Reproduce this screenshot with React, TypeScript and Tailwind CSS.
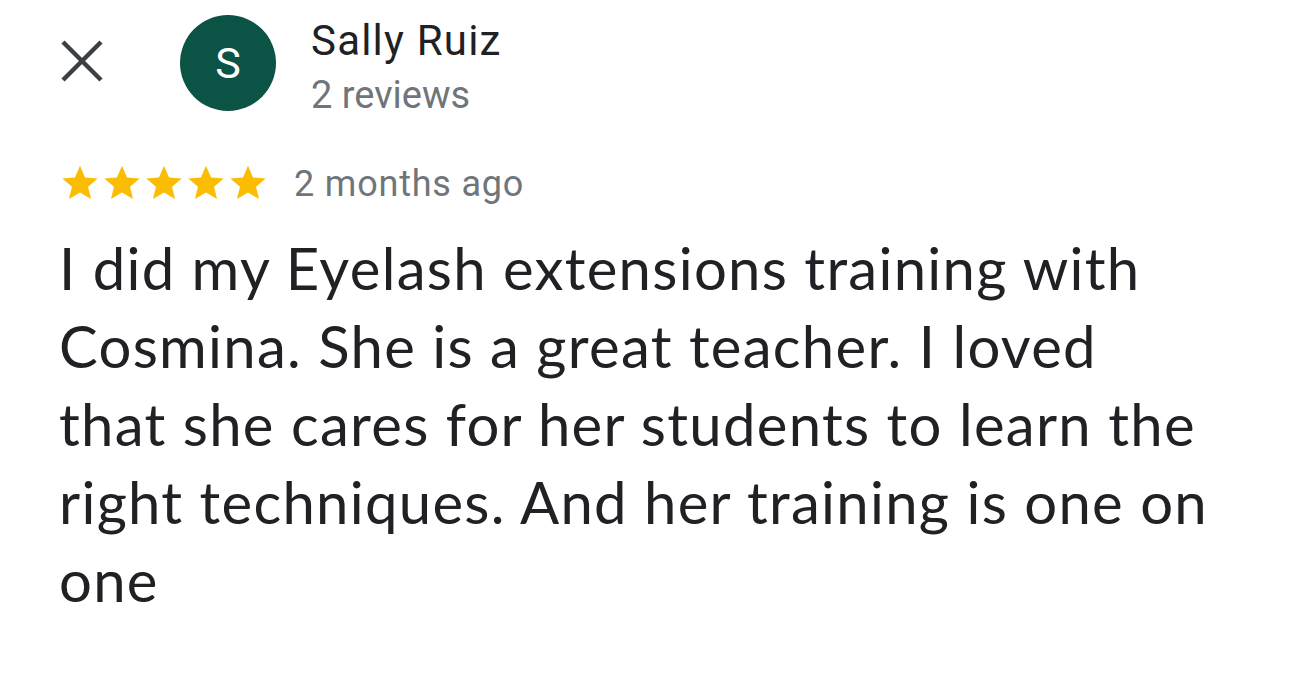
import React from "react";

const Star = () => (
  <svg width="42" height="42" viewBox="0 0 24 24" className="block">
    <path
      fill="#fbbc04"
      d="M12 2.2l2.9 6.6 7.2.6-5.5 4.7 1.7 7.1L12 17.4l-6.3 3.8 1.7-7.1L1.9 9.4l7.2-.6z"
    />
  </svg>
);

export default function App() {
  return (
    <div className="w-[1290px] h-[674px] bg-white overflow-hidden" style={{ fontFamily: "Roboto, sans-serif" }}>
      <div className="flex items-start pt-[15px] pl-[61px]">
        <svg width="42" height="42" viewBox="0 0 42 42" className="mt-[25px] mr-[77px] shrink-0">
          <path d="M2 2L40 40M40 2L2 40" stroke="#3c4043" strokeWidth="4.5" />
        </svg>
        <div className="w-[96px] h-[96px] shrink-0 rounded-full bg-[#0b5345] flex items-center justify-center text-white text-[43px] leading-none">
          S
        </div>
        <div className="ml-[35px] mt-[2px] flex flex-col">
          <div className="text-[42px] leading-[48px] tracking-[1.2px] text-[#202124]">Sally Ruiz</div>
          <div className="mt-[8px] text-[38px] leading-[44px] text-[#70757a]">2 reviews</div>
        </div>
      </div>
      <div className="flex items-start pl-[59px] mt-[45px]">
        <div className="flex">
          <Star />
          <Star />
          <Star />
          <Star />
          <Star />
        </div>
        <div className="ml-[25px] mt-[1px] text-[36px] leading-[42px] tracking-[0.8px] text-[#70757a]">2 months ago</div>
      </div>
      <div
        className="pl-[59px] mt-[24px] text-[58px] leading-[78px] tracking-[1.3px] whitespace-nowrap text-[#202124]"
        style={{ fontFamily: "Lato, sans-serif" }}
      >
        I did my Eyelash extensions training with
        <br />
        Cosmina. She is a great teacher. I loved
        <br />
        that she cares for her students to learn the
        <br />
        right techniques. And her training is one on
        <br />
        one
      </div>
    </div>
  );
}
